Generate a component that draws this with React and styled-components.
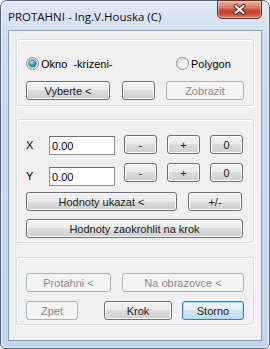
import React from "react";
import styled, { createGlobalStyle } from "styled-components";

const Global = createGlobalStyle`
  body {
    margin: 0;
    background: #fff;
  }
`;

const Window = styled.div`
  box-sizing: border-box;
  width: 270px;
  height: 349px;
  display: flex;
  flex-direction: column;
  padding: 0 7px 7px;
  border: 1px solid #56677f;
  border-radius: 7px 7px 5px 5px;
  background: linear-gradient(#e1e9f4, #cfdcee 40px, #c5d6eb);
  box-shadow: inset 0 0 0 1px rgba(255, 255, 255, 0.6);
  font-family: "Liberation Sans", Arial, sans-serif;
  font-size: 11px;
  font-weight: 400;
  color: #000;
`;

const TitleBar = styled.div`
  height: 29px;
  display: flex;
  align-items: center;
  justify-content: space-between;
`;

const Title = styled.span`
  font-family: "Open Sans", "Liberation Sans", sans-serif;
  font-size: 11.5px;
  padding-top: 1px;
  color: #111;
`;

const CloseButton = styled.div`
  box-sizing: border-box;
  align-self: flex-start;
  width: 45px;
  height: 19px;
  margin-top: -1px;
  display: flex;
  align-items: center;
  justify-content: center;
  border: 1px solid #6b2a22;
  border-radius: 0 0 5px 5px;
  background: linear-gradient(#eab0a2, #d97a68 40%, #c8462f 55%, #c7472f 75%, #dd8a72);
  box-shadow: inset 0 0 0 1px rgba(255, 255, 255, 0.35);
`;

const Client = styled.div`
  flex: 1;
  display: flex;
  flex-direction: column;
  padding: 8px 7px;
  border: 1px solid #8c9db5;
  background: #f0f0f0;
`;

const Group = styled.div`
  display: flex;
  flex-direction: column;
  margin-top: ${(p) => p.$top || 0}px;
  padding: ${(p) => p.$pad};
  border: 1px solid #d5dfe5;
  border-radius: 3px;
  box-shadow: inset 1px 1px 0 #fff, 1px 1px 0 #fff;
`;

const Row = styled.div`
  display: flex;
  align-items: flex-start;
  margin-top: ${(p) => p.$top || 0}px;
`;

const RadioRow = styled.div`
  display: grid;
  grid-template-columns: 150px auto;
  height: 13px;
`;

const RadioLabel = styled.label`
  display: flex;
  align-items: center;
  gap: 2px;
  white-space: pre;
`;

const RadioMark = styled.span`
  box-sizing: border-box;
  width: 13px;
  height: 13px;
  display: flex;
  align-items: center;
  justify-content: center;
  border: 1px solid #8e8f8f;
  border-radius: 50%;
  background: radial-gradient(circle at 65% 70%, #fff 0, #f2f2f2 35%, #d4d4d4 100%);

  &::after {
    content: "";
    display: ${(p) => (p.$checked ? "block" : "none")};
    width: 7px;
    height: 7px;
    border-radius: 50%;
    background: radial-gradient(circle at 40% 35%, #b4e8fc 0, #3095cc 45%, #0b4a75 100%);
    box-shadow: 0 0 0 1px rgba(20, 70, 105, 0.45);
  }
`;

const Button = styled.button`
  box-sizing: border-box;
  width: ${(p) => p.$w}px;
  height: 19px;
  margin: 0 0 0 ${(p) => p.$ml || 0}px;
  padding: 0;
  font-family: inherit;
  font-size: 11px;
  font-weight: 400;
  color: #1c1c1c;
  border: 1px solid #707070;
  border-radius: 3px;
  background: linear-gradient(#f2f2f2, #ebebeb 50%, #dddddd 50%, #cfcfcf);
  box-shadow: inset 0 0 0 1px #fcfcfc;

  &:disabled {
    color: #8a8a8a;
    border-color: #adb2b5;
    background: #f4f4f4;
    box-shadow: none;
  }
`;

const DefaultButton = styled(Button)`
  border-color: #3c7fb1;
  background: linear-gradient(#eef5fa, #e4eef5 50%, #d5e4ee 50%, #c9dbe7);
  box-shadow: inset 0 0 0 1px #a9dcf6;
`;

const AxisLabel = styled.span`
  width: 23px;
  height: 19px;
  margin-top: ${(p) => p.$top}px;
  line-height: 19px;
`;

const TextBox = styled.input`
  box-sizing: border-box;
  width: 66px;
  height: 19px;
  margin: ${(p) => p.$top}px 0 0;
  padding: 0 2px;
  font-family: inherit;
  font-size: 11px;
  font-weight: 400;
  color: #000;
  border: 1px solid #8e8f8f;
  border-top-color: #6f7071;
  background: #fff;
  outline: none;
`;

const CloseGlyph = () => (
  <svg width="13" height="11" viewBox="0 0 13 11">
    <path d="M2.5 2 L10.5 9 M10.5 2 L2.5 9" stroke="#3d1d19" strokeWidth="4" strokeLinecap="round" />
    <path d="M2.5 2 L10.5 9 M10.5 2 L2.5 9" stroke="#fff" strokeWidth="2.3" strokeLinecap="round" />
  </svg>
);

const CoordRow = ({ label, top, boxTop }) => (
  <Row $top={top}>
    <AxisLabel $top={boxTop}>{label}</AxisLabel>
    <TextBox $top={boxTop} defaultValue="0.00" />
    <Button $w={33} $ml={9}>-</Button>
    <Button $w={33} $ml={10}>+</Button>
    <Button $w={33} $ml={10}>0</Button>
  </Row>
);

export default function App() {
  return (
    <>
      <Global />
      <Window>
        <TitleBar>
          <Title>PROTAHNI - Ing.V.Houska (C)</Title>
          <CloseButton>
            <CloseGlyph />
          </CloseButton>
        </TitleBar>
        <Client>
          <Group $pad="17px 9px 5px">
            <RadioRow>
              <RadioLabel>
                <RadioMark $checked />
                {"Okno  -krizeni-"}
              </RadioLabel>
              <RadioLabel>
                <RadioMark />
                Polygon
              </RadioLabel>
            </RadioRow>
            <Row $top={11}>
              <Button $w={84}>Vyberte &lt;</Button>
              <Button $w={33} $ml={12}></Button>
              <Button $w={78} $ml={11} disabled>Zobrazit</Button>
            </Row>
          </Group>

          <Group $top={13} $pad="15px 9px 4px">
            <CoordRow label="X" top={0} boxTop={1} />
            <CoordRow label="Y" top={8} boxTop={4} />
            <Row $top={6}>
              <Button $w={151}>Hodnoty ukazat &lt;</Button>
              <Button $w={54} $ml={11}>+/-</Button>
            </Row>
            <Row $top={8}>
              <Button $w={217}>Hodnoty zaokrohlit na krok</Button>
            </Row>
          </Group>

          <Group $top={14} $pad="15px 9px 4px">
            <Row>
              <Button $w={85} disabled>Protahni &lt;</Button>
              <Button $w={122} $ml={11} disabled>Na obrazovce &lt;</Button>
            </Row>
            <Row $top={9}>
              <Button $w={52} disabled>Zpet</Button>
              <Button $w={68} $ml={26}>Krok</Button>
              <DefaultButton $w={62} $ml={10}>Storno</DefaultButton>
            </Row>
          </Group>
        </Client>
      </Window>
    </>
  );
}
